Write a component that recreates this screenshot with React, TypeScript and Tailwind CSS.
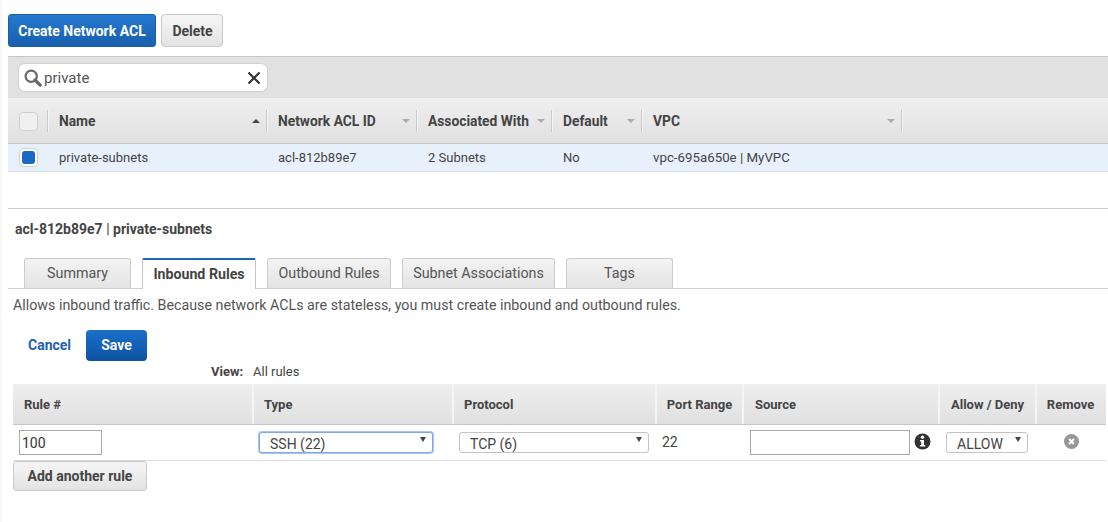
import React from "react";

function Caret({ up, dark }: { up?: boolean; dark?: boolean }) {
  return (
    <svg width="8" height="4" viewBox="0 0 8 4" className="shrink-0">
      <path d={up ? "M4 0 L8 4 L0 4 Z" : "M0 0 L8 0 L4 4 Z"} fill={dark ? "#444444" : "#ababab"} />
    </svg>
  );
}

function HeadCell({ w, label, up }: { w: string; label: string; up?: boolean }) {
  return (
    <div className={`${w} h-[22px] flex items-center justify-between pl-[11px] pr-[6px] border-r border-[#c9c9c9] shadow-[1px_0_0_#f4f4f4] font-bold text-[#444444] text-[13.8px]`}>
      <span className="pt-[1px]">{label}</span>
      <Caret up={up} dark={up} />
    </div>
  );
}

function Tab({ w, label, active }: { w: string; label: string; active?: boolean }) {
  return active ? (
    <div className={`${w} h-[31px] -mb-px pt-[1px] bg-white border border-[#c4c4c4] border-b-0 border-t-2 border-t-[#1a65b5] rounded-t-[2px] flex items-center justify-center font-bold text-[14.2px] text-[#444444] relative z-10`}>
      {label}
    </div>
  ) : (
    <div className={`${w} h-[30px] pt-[1px] bg-linear-to-b from-[#f3f3f3] to-[#e4e4e4] border border-[#cccccc] border-b-0 rounded-t-[3px] flex items-center justify-center text-[14.3px] text-[#555555]`}>
      {label}
    </div>
  );
}

function ColHead({ w, label, align }: { w: string; label: string; align: string }) {
  return (
    <div className={`${w} flex items-center pt-[1px] ${align} border-r-2 border-[#f5f5f5] font-bold text-[13px] text-[#444444]`}>
      {label}
    </div>
  );
}

function FakeSelect({ w, label, focus, pl }: { w: string; label: string; focus?: boolean; pl: string }) {
  return (
    <div className={`${w} h-[21px] relative rounded-[3px] bg-white ${pl} pt-[1px] text-[14px] leading-[20px] text-[#444444] border ${focus ? "border-[#7fa8e8] shadow-[0_0_0_1px_#a9c6f2]" : "border-[#c4c4c4]"} overflow-hidden`}>
      {label}
      <span className="absolute right-[6px] top-[4px] flex">
        <svg width="6" height="5" viewBox="0 0 6 5"><path d="M0 0 L6 0 L3 5 Z" fill="#444444" /></svg>
      </span>
    </div>
  );
}

export default function App() {
  return (
    <div className="w-[1108px] h-[522px] overflow-hidden bg-white text-[#444444] text-[13px] border-l-2 border-[#f8f8f8]" style={{ fontFamily: "Roboto, 'Liberation Sans', sans-serif" }}>
      {/* Actions */}
      <div className="flex gap-[5px] pl-[6px] pt-[14px]">
        <button className="w-[148px] h-[33px] pt-[2px] rounded-[3px] bg-linear-to-b from-[#2479d0] to-[#195fae] border border-[#1a5ea8] text-white font-bold text-[14px]">Create Network ACL</button>
        <button className="w-[62px] h-[33px] pt-[2px] pl-[1px] rounded-[4px] bg-linear-to-b from-[#f6f6f6] to-[#e3e3e3] border border-[#c8c8c8] text-[#444444] font-bold text-[14px]">Delete</button>
      </div>

      {/* Filter bar */}
      <div className="ml-[6px] mt-[9px] h-[43px] bg-[#e1e1e1] border-t border-[#c6c6c6] border-b border-b-[#f2f2f2] flex items-center pl-[10px]">
        <div className="w-[250px] h-[29px] bg-white rounded-[7px] border border-[#d0d0d0] flex items-center pl-[5px] pr-[6px]">
          <svg width="18" height="18" viewBox="0 0 18 18" className="shrink-0">
            <circle cx="7.2" cy="7.2" r="5.6" fill="none" stroke="#6a6a6a" strokeWidth="2.2" />
            <path d="M11 11 L16.2 16.2" stroke="#6a6a6a" strokeWidth="3.2" strokeLinecap="round" />
          </svg>
          <span className="ml-[2px] pt-[1px] flex-1 text-[15px] text-[#555555]">private</span>
          <svg width="14" height="14" viewBox="0 0 14 14" className="shrink-0">
            <path d="M1.5 1.5 L12.5 12.5 M12.5 1.5 L1.5 12.5" stroke="#333333" strokeWidth="2.2" />
          </svg>
        </div>
      </div>

      {/* List header */}
      <div className="ml-[6px] h-[45px] bg-linear-to-b from-[#efefef] to-[#e0e0e0] border-b border-[#c6c6c6] flex items-center">
        <div className="w-[40px] h-[22px] flex items-center pl-[11px] border-r border-[#c9c9c9] shadow-[1px_0_0_#f4f4f4]">
          <div className="w-[19px] h-[19px] rounded-[4px] bg-[#f0f0f0] border border-[#cfcfcf]" />
        </div>
        <HeadCell w="w-[219px]" label="Name" up />
        <HeadCell w="w-[150px]" label="Network ACL ID" />
        <HeadCell w="w-[135px]" label="Associated With" />
        <HeadCell w="w-[90px]" label="Default" />
        <HeadCell w="w-[260px]" label="VPC" />
      </div>

      {/* Selected row */}
      <div className="ml-[6px] h-[28px] bg-[#e8f1fb] border-b border-[#d9dee4] flex items-center text-[13px] text-[#444444]">
        <div className="w-[40px] pl-[11px]">
          <div className="w-[19px] h-[19px] rounded-[4px] bg-white border border-[#cfcfcf] flex items-center justify-center">
            <div className="w-[13px] h-[13px] rounded-[3px] bg-[#1a69c4]" />
          </div>
        </div>
        <div className="w-[219px] pl-[11px]">private-subnets</div>
        <div className="w-[150px] pl-[11px]">acl-812b89e7</div>
        <div className="w-[135px] pl-[11px]">2 Subnets</div>
        <div className="w-[90px] pl-[11px]">No</div>
        <div className="pl-[11px] text-[13.3px]">vpc-695a650e | MyVPC</div>
      </div>

      {/* Details */}
      <div className="ml-[6px] mt-[36px] border-t border-[#cccccc] pt-[12px]">
        <div className="pl-[7px] h-[17px] leading-[17px] text-[14px] font-bold text-[#444444]">
          acl-812b89e7 <span className="font-normal">|</span> private-subnets
        </div>
        <div className="mt-[20px] border-b border-[#cfcfcf] flex items-end pl-[16px] gap-[11px] h-[31px]">
          <Tab w="w-[107px]" label="Summary" />
          <Tab w="w-[114px]" label="Inbound Rules" active />
          <Tab w="w-[124px]" label="Outbound Rules" />
          <Tab w="w-[153px]" label="Subnet Associations" />
          <Tab w="w-[107px]" label="Tags" />
        </div>
      </div>

      <div className="pl-[11px] mt-[8px] h-[17px] leading-[17px] text-[14.25px] text-[#555555]">
        Allows inbound traffic. Because network ACLs are stateless, you must create inbound and outbound rules.
      </div>

      <div className="flex items-center pl-[26px] mt-[16px]">
        <span className="w-[58px] font-bold text-[14px] text-[#1f5fb4]">Cancel</span>
        <button className="w-[61px] h-[31px] rounded-[4px] bg-linear-to-b from-[#1a70cc] to-[#0d52a0] text-white font-bold text-[14px]">Save</button>
      </div>

      <div className="flex pl-[209px] mt-[3px] h-[16px] leading-[16px] text-[13px]">
        <span className="w-[42px] font-bold">View:</span>
        <span>All rules</span>
      </div>

      {/* Rules table */}
      <div className="ml-[11px] w-[1093px] mt-[4px]">
        <div className="flex h-[41px] bg-linear-to-b from-[#efefef] to-[#e0e0e0] border-b border-[#c6c6c6]">
          <ColHead w="w-[241px]" label="Rule #" align="pl-[11px]" />
          <ColHead w="w-[200px]" label="Type" align="pl-[10px]" />
          <ColHead w="w-[203px]" label="Protocol" align="pl-[10px]" />
          <ColHead w="w-[87px]" label="Port Range" align="justify-center" />
          <ColHead w="w-[196px]" label="Source" align="pl-[11px]" />
          <ColHead w="w-[97px]" label="Allow / Deny" align="justify-center" />
          <div className="flex-1 flex items-center justify-center pt-[1px] pr-[2px] font-bold text-[13px]">Remove</div>
        </div>
        <div className="flex h-[36px] border-b border-[#dcdcdc] items-center text-[14px]">
          <div className="w-[240px] pl-[6px]">
            <div className="w-[83px] h-[25px] border border-[#a9a9a9] pl-[2px] leading-[24px] text-[14px] text-[#333333]">100</div>
          </div>
          <div className="w-[200px] pl-[6px]"><FakeSelect w="w-[174px]" label="SSH (22)" pl="pl-[10px]" focus /></div>
          <div className="w-[203px] pl-[6px]"><FakeSelect w="w-[190px]" label="TCP (6)" pl="pl-[10px]" /></div>
          <div className="w-[87px] pl-[6px] -mt-[1px]">22</div>
          <div className="w-[196px] pl-[7px] flex items-center gap-[4px]">
            <div className="w-[160px] h-[25px] border border-[#a9a9a9] bg-white" />
            <svg width="17" height="17" viewBox="0 0 17 17" className="-mt-[3px]">
              <circle cx="8.5" cy="8.5" r="8" fill="#333333" />
              <circle cx="8.5" cy="4.3" r="1.7" fill="#ffffff" />
              <path d="M6 7 H10 V12 H11.2 V13.6 H5.9 V12 H7.2 V8.6 H6 Z" fill="#ffffff" />
            </svg>
          </div>
          <div className="w-[97px] pl-[7px]"><FakeSelect w="w-[82px]" label="ALLOW" pl="pl-[10px]" /></div>
          <div className="flex-1 flex justify-center -mt-[3px]">
            <svg width="15" height="15" viewBox="0 0 15 15">
              <circle cx="7.5" cy="7.5" r="7.5" fill="#979797" />
              <path d="M5 5 L10 10 M10 5 L5 10" stroke="#ffffff" strokeWidth="2.2" />
            </svg>
          </div>
        </div>
        <button className="w-[134px] h-[30px] rounded-[3px] bg-linear-to-b from-[#f6f6f6] to-[#e3e3e3] border border-[#c8c8c8] text-[#444444] font-bold text-[14px] block">Add another rule</button>
      </div>
    </div>
  );
}
